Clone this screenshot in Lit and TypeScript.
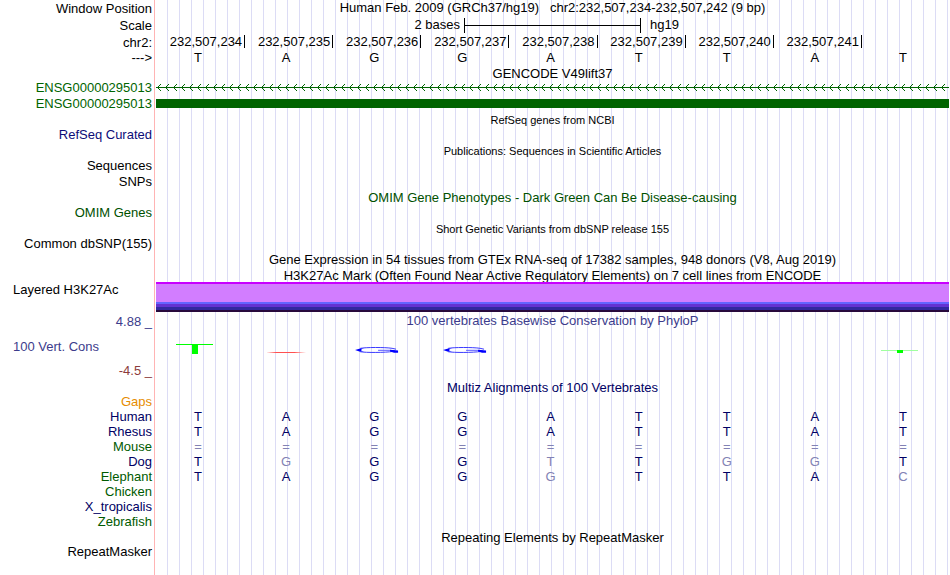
import { LitElement, html, css, svg, nothing, type TemplateResult } from "lit";
import { customElement } from "lit/decorators.js";

const BASES = "TAGGATTAT";
const POSITIONS = [234, 235, 236, 237, 238, 239, 240, 241];

interface Species {
  name: string;
  tone: "navy" | "leaf";
  seq: string;
}

/* Lower-case letters are bases that differ from the human sequence. */
const SPECIES: Species[] = [
  { name: "Human", tone: "navy", seq: "TAGGATTAT" },
  { name: "Rhesus", tone: "navy", seq: "TAGGATTAT" },
  { name: "Mouse", tone: "leaf", seq: "=========" },
  { name: "Dog", tone: "navy", seq: "TgGGtTggT" },
  { name: "Elephant", tone: "leaf", seq: "TAGGgTTAc" },
  { name: "Chicken", tone: "leaf", seq: "" },
  { name: "X_tropicalis", tone: "navy", seq: "" },
  { name: "Zebrafish", tone: "leaf", seq: "" },
];

@customElement("app-root")
export class AppRoot extends LitElement {
  static styles = css`
    :host {
      display: block;
      min-height: 100vh;
      background: #fff;
      color: #000;
      font: 13px/15px "Liberation Sans", Arial, sans-serif;
    }
    .browser {
      box-sizing: border-box;
      min-height: 100vh;
      padding-right: 1px;
      display: flex;
      flex-direction: column;
      background:
        linear-gradient(#ffb4b4, #ffb4b4) 154px 0 / 1px 100% no-repeat,
        repeating-linear-gradient(to right, #dcdcf5 0 1px, transparent 1px 12px) 167px 0 no-repeat;
    }
    .row {
      display: grid;
      grid-template-columns: 152px minmax(0, 1fr);
      column-gap: 4px;
      height: 15px;
    }
    .row.h16 { height: 16px; }
    .row.h18 { height: 18px; }
    .row.h14 { height: 14px; }
    .label {
      text-align: right;
      white-space: nowrap;
      align-self: center;
    }
    .track { min-width: 0; white-space: nowrap; }
    .title {
      margin: 0;
      font-size: 13px;
      font-weight: normal;
      text-align: center;
      line-height: 18px;
      white-space: pre;
    }
    .h14 .title { line-height: 16px; }
    .title.small { font-size: 11px; }
    .title.first { line-height: 15px; }
    .green { color: #006400; }
    .omim { color: #005000; }
    .refseq { color: #0c0c78; }
    .navy { color: #000064; }
    .leaf { color: #005a00; }
    .gaps { color: #e68c00; }
    .slate { color: #3c3c8c; }
    .maroon { color: #8c3c3c; }

    .scale {
      display: grid;
      grid-template-columns: 308fr 177fr 308fr;
      align-items: center;
      line-height: 18px;
    }
    .scale-from { text-align: right; padding-right: 4px; }
    .scale-to { padding-left: 9px; }
    .rule {
      height: 15px;
      border: solid #000;
      border-width: 0 1px;
      background: linear-gradient(#000, #000) 0 7px / 100% 1px no-repeat;
      box-sizing: border-box;
    }
    .cells { display: grid; grid-template-columns: repeat(9, minmax(0, 1fr)); }
    .pos {
      text-align: right;
      padding-right: 3px;
      line-height: 16px;
      background: linear-gradient(#000, #000) 100% 1px / 1px 13px no-repeat;
      margin-right: -1px;
    }
    .base { text-align: center; padding-right: 4px; }
    .diff { color: #8282b4; }

    .intron { display: block; width: 100%; height: 15px; }
    .exon { height: 9px; background: #006400; margin-top: 4px; }

    .layered { height: 30px; }
    .layered .label { justify-self: start; padding-left: 13px; align-self: start; }
    .signal {
      background: linear-gradient(
        #c800ff 0 2px, #d27dff 2px 20px, #6464ff 20px 22px,
        #6432d2 22px 25px, #3228a0 25px 28px, #280a3c 28px 30px);
    }
    .cons { height: 68px; }
    .axis {
      display: flex;
      flex-direction: column;
      justify-content: space-between;
      padding: 2px 0;
      box-sizing: border-box;
    }
    .axis .label { align-self: flex-end; }
    .axis .name { align-self: flex-start; padding-left: 13px; }
    .logos { height: 40px; align-items: center; }
    .logo { display: block; width: 100%; height: 20px; }
  `;

  private row(label: unknown, tone: string, track: unknown = nothing, size = ""): TemplateResult {
    return html`<div class="row ${size}">
      <div class="label ${tone}">${label}</div>
      <div class="track">${track}</div>
    </div>`;
  }

  private title(text: string, tone = "", size = ""): TemplateResult {
    return html`<div class="row ${size}">
      <div class="label"></div>
      <h2 class="title ${tone}">${text}</h2>
    </div>`;
  }

  private bases(seq: string): TemplateResult {
    return html`<div class="cells">
      ${[...seq].map(
        (b) => html`<span class="base ${/[a-z=]/.test(b) ? "diff" : ""}">${b.toUpperCase()}</span>`
      )}
    </div>`;
  }

  private intron(): TemplateResult {
    return html`<svg class="intron" aria-hidden="true" shape-rendering="crispEdges">
      <defs>
        <pattern id="arrows" width="8" height="15" patternUnits="userSpaceOnUse">
          <path
            d="M1 7h1v1h-1z M2 6h1v1h-1z M3 5h1v1h-1z M4 4h1v1h-1z M2 8h1v1h-1z M3 9h1v1h-1z M4 10h1v1h-1z"
            fill="#006400"
          />
        </pattern>
      </defs>
      <rect width="100%" height="15" fill="url(#arrows)" />
      <rect y="7" width="100%" height="1" fill="#006400" />
    </svg>`;
  }

  private logo(index: number): TemplateResult {
    const g = svg`
      <path d="M23 11L29 9.2L32 9.6C28 10.5 28 11.8 32 12.6L28 12.8Z" fill="#0000ff" />
      <path d="M28 9.4C33 8.2 53 8.2 60 9.3L64 10.2" fill="none" stroke="#3c3cff" />
      <path d="M28 12.7C34 13.8 53 13.7 61 12.4" fill="none" stroke="#3c3cff" />
      <path d="M46 11.3H58L63 12" fill="none" stroke="#5a5aff" />
      <path d="M58 10.8L66 11.4V13.8H62L58 12.4Z" fill="#0000ff" />`;
    const shapes: Record<number, unknown> = {
      0: svg`<rect x="20" y="4" width="37" height="1" fill="#00ff00" shape-rendering="crispEdges" />
        <rect x="36" y="4" width="6" height="10" fill="#00ff00" shape-rendering="crispEdges" />`,
      1: svg`<path d="M22 12.5L32 12H50L62 12.5L50 13H32Z" fill="#ff5050" />`,
      2: svg`<g transform="translate(0 -1)">${g}</g>`,
      3: svg`<g transform="translate(0 -1)">${g}</g>`,
      8: svg`<rect x="20" y="10" width="37" height="1" fill="#a0ffa0" shape-rendering="crispEdges" />
        <rect x="36" y="10" width="6" height="3" fill="#00ff00" shape-rendering="crispEdges" />`,
    };
    return html`<svg class="logo" viewBox="0 0 88 20" preserveAspectRatio="xMidYMid meet" aria-hidden="true">
      ${shapes[index] ?? nothing}
    </svg>`;
  }

  render() {
    return html`<main class="browser">
      ${this.row(
        "Window Position",
        "",
        html`<h1 class="title first">Human Feb. 2009 (GRCh37/hg19)   chr2:232,507,234-232,507,242 (9 bp)</h1>`,
        "h16"
      )}
      ${this.row(
        "Scale",
        "",
        html`<div class="scale">
          <span class="scale-from">2 bases</span><span class="rule"></span><span class="scale-to">hg19</span>
        </div>`,
        "h18"
      )}
      ${this.row(
        "chr2:",
        "",
        html`<div class="cells">
          ${POSITIONS.map((p) => html`<span class="pos">232,507,${p}</span>`)}
        </div>`,
        "h16"
      )}
      ${this.row("--->", "", this.bases(BASES))}
      ${this.title("GENCODE V49lift37")}
      ${this.row("ENSG00000295013", "green", this.intron())}
      ${this.row("ENSG00000295013", "green", html`<div class="exon"></div>`, "h16")}
      ${this.title("RefSeq genes from NCBI", "small", "h16")}
      ${this.row("RefSeq Curated", "refseq")}
      ${this.title("Publications: Sequences in Scientific Articles", "small", "h16")}
      ${this.row("Sequences", "")}
      ${this.row("SNPs", "", nothing, "h16")}
      ${this.title("OMIM Gene Phenotypes - Dark Green Can Be Disease-causing", "omim", "h16")}
      ${this.row("OMIM Genes", "omim")}
      ${this.title("Short Genetic Variants from dbSNP release 155", "small", "h16")}
      ${this.row("Common dbSNP(155)", "")}
      ${this.title("Gene Expression in 54 tissues from GTEx RNA-seq of 17382 samples, 948 donors (V8, Aug 2019)", "", "h16")}
      ${this.title("H3K27Ac Mark (Often Found Near Active Regulatory Elements) on 7 cell lines from ENCODE")}
      <div class="row layered">
        <div class="label">Layered H3K27Ac</div>
        <div class="signal"></div>
      </div>
      <div class="row cons">
        <div class="axis">
          <div class="label slate">4.88 _</div>
          <div class="name slate">100 Vert. Cons</div>
          <div class="label maroon">-4.5 _</div>
        </div>
        <div class="track">
          <h2 class="title slate">100 vertebrates Basewise Conservation by PhyloP</h2>
          <div class="cells logos">${[...BASES].map((_, i) => this.logo(i))}</div>
        </div>
      </div>
      ${this.title("Multiz Alignments of 100 Vertebrates", "navy", "h14")}
      ${this.row("Gaps", "gaps")}
      ${SPECIES.map((s) => this.row(s.name, s.tone, html`<div class="navy">${this.bases(s.seq)}</div>`))}
      ${this.title("Repeating Elements by RepeatMasker")}
      ${this.row("RepeatMasker", "")}
    </main>`;
  }
}
